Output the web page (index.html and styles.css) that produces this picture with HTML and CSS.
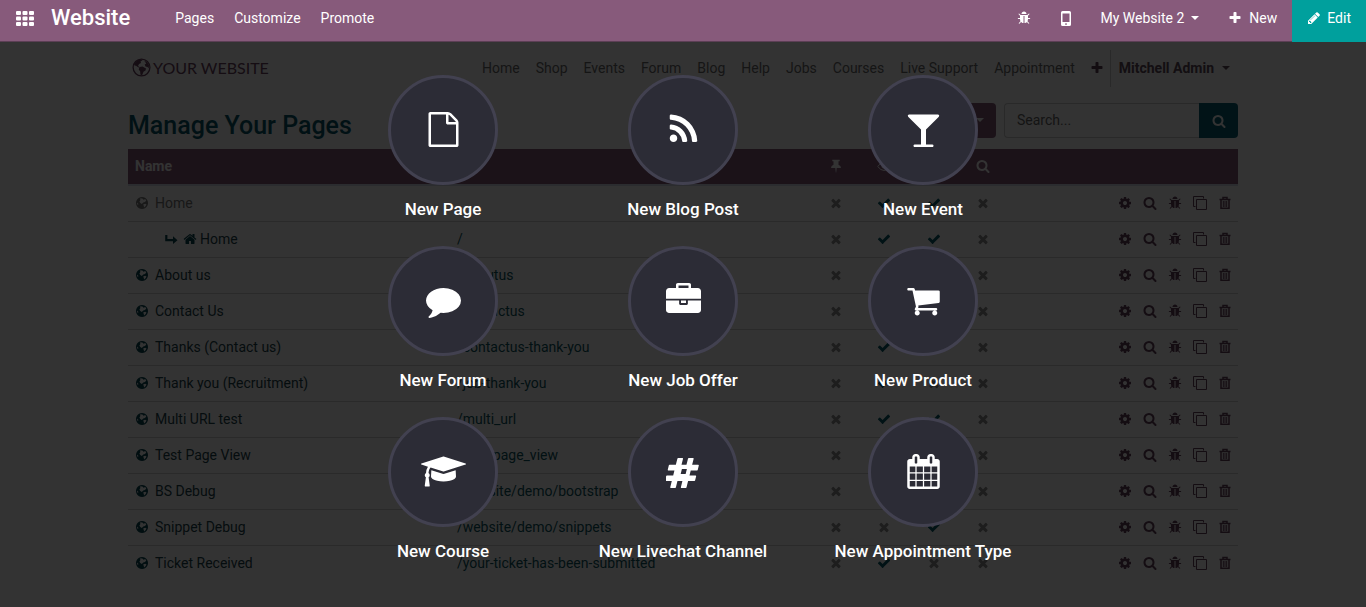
FILE: index.html
```html
<!DOCTYPE html>
<html lang="en">
<head>
<meta charset="utf-8">
<title>Website - Manage Your Pages</title>
<link rel="stylesheet" href="styles.css">
</head>
<body>
<svg class="sprite" aria-hidden="true">
  <symbol id="th" viewBox="0 0 18 15"><rect width="5" height="4" rx="1"/><rect x="6.5" width="5" height="4" rx="1"/><rect x="13" width="5" height="4" rx="1"/><rect y="5.5" width="5" height="4" rx="1"/><rect x="6.5" y="5.5" width="5" height="4" rx="1"/><rect x="13" y="5.5" width="5" height="4" rx="1"/><rect y="11" width="5" height="4" rx="1"/><rect x="6.5" y="11" width="5" height="4" rx="1"/><rect x="13" y="11" width="5" height="4" rx="1"/></symbol>
  <symbol id="search" viewBox="0 0 1792 1792"><path d="M1216 832q0-185-131.5-316.5t-316.5-131.5-316.5 131.5-131.5 316.5 131.5 316.5 316.5 131.5 316.5-131.5 131.5-316.5zm512 832q0 52-38 90t-90 38q-54 0-90-38l-343-342q-179 124-399 124-143 0-273.5-55.5t-225-150-150-225-55.5-273.5 55.5-273.5 150-225 225-150 273.5-55.5 273.5 55.5 225 150 150 225 55.5 273.5q0 220-124 399l343 343q37 37 37 90z"/></symbol>
  <symbol id="plus" viewBox="0 0 1792 1792"><path d="M1600 736v192q0 40-28 68t-68 28h-416v416q0 40-28 68t-68 28h-192q-40 0-68-28t-28-68v-416h-416q-40 0-68-28t-28-68v-192q0-40 28-68t68-28h416v-416q0-40 28-68t68-28h192q40 0 68 28t28 68v416h416q40 0 68 28t28 68z"/></symbol>
  <symbol id="check" viewBox="0 0 1792 1792"><path d="M1671 566q0 40-28 68l-724 724-136 136q-28 28-68 28t-68-28l-136-136-362-362q-28-28-28-68t28-68l136-136q28-28 68-28t68 28l294 295 656-657q28-28 68-28t68 28l136 136q28 28 28 68z"/></symbol>
  <symbol id="times" viewBox="0 0 1792 1792"><path d="M1490 1322q0 40-28 68l-136 136q-28 28-68 28t-68-28l-294-294-294 294q-28 28-68 28t-68-28l-136-136q-28-28-28-68t28-68l294-294-294-294q-28-28-28-68t28-68l136-136q28-28 68-28t68 28l294 294 294-294q28-28 68-28t68 28l136 136q28 28 28 68t-28 68l-294 294 294 294q28 28 28 68z"/></symbol>
  <symbol id="pencil" viewBox="0 0 1792 1792"><path d="M491 1536l91-91-235-235-91 91v107h128v128h107zm523-928q0-22-22-22-10 0-17 7l-542 542q-7 7-7 17 0 22 22 22 10 0 17-7l542-542q7-7 7-17zm-54-192l416 416-832 832h-416v-416zm683 96q0 53-37 90l-166 166-416-416 166-165q36-38 90-38 53 0 91 38l235 234q37 39 37 91z"/></symbol>
  <symbol id="bug" viewBox="0 0 1792 1792"><path d="M1696 960q0 26-19 45t-45 19h-224q0 171-67 290l208 209q19 19 19 45t-19 45q-18 19-45 19t-45-19l-198-197q-5 5-15 13t-42 28.5-65 36.5-82 29-97 13v-896h-128v896q-51 0-101.5-13.5t-87-33-66-39-43.5-32.5l-15-14-183 207q-20 21-48 21-24 0-43-16-19-18-20.5-44.5t15.5-46.5l202-227q-58-114-58-274h-224q-26 0-45-19t-19-45 19-45 45-19h224v-294l-173-173q-19-19-19-45t19-45 45-19 45 19l173 173h844l173-173q19-19 45-19t45 19 19 45-19 45l-173 173v294h224q26 0 45 19t19 45zm-480-576h-640q0-133 93.5-226.5t226.5-93.5 226.5 93.5 93.5 226.5z"/></symbol>
  <symbol id="mobile" viewBox="0 0 10 15"><path fill-rule="evenodd" d="M1.600 0h6.800q1.600 0 1.600 1.600v11.800q0 1.600-1.600 1.600h-6.800q-1.600 0-1.600-1.600v-11.800q0-1.600 1.600-1.600zM1.500 2.500v8.500h7v-8.500zM5 12.200a.8.8 0 1 0 .01 0z"/></symbol>
  <symbol id="home" viewBox="0 0 1792 1792"><path d="M1472 992v480q0 26-19 45t-45 19h-384v-384h-256v384h-384q-26 0-45-19t-19-45v-480q0-1 .5-3t.5-3l575-474 575 474q1 2 1 6zm223-69l-62 74q-8 9-21 11h-3q-13 0-21-7l-692-577-692 577q-12 8-24 7-13-2-21-11l-62-74q-8-10-7-23.500t11-21.500l719-599q32-26 76-26t76 26l244 204v-195q0-14 9-23t23-9h192q14 0 23 9t9 23v408l219 182q10 8 11 21.500t-7 23.500z"/></symbol>
  <symbol id="turn" viewBox="0 0 14 14"><path d="M1.200 3h2.200v4h5.600v-2.700l4.500 3.900-4.500 3.900v-2.800h-7.800z"/></symbol>
  <symbol id="globe" viewBox="0 0 14 14"><path fill-rule="evenodd" d="M7 1a6 6 0 1 0 .01 0zM5.200 2.300l2.200.2 1.200 1.300 1.600-.7 1.100 1.400-1.300 1.500-1.700.6-1.500 1.500-1.500-1-.9-1.600.9-1.200zM8.300 8.300l2-.6 1.200.8-.8 1.600-1.500 1.400-.5-1.600zM2 6.500l1.300 1.300-.2 1.300-.9-.9z"/></symbol>
  <symbol id="world" viewBox="0 0 19 19"><circle cx="9.500" cy="9.500" r="8.400" fill="none" stroke="currentColor" stroke-width="1.300"/><path d="M2 6l3-3.500 4-1.300 1.500 1-2 1.300.5 1.500-2 1-1 2 1.500 1-1 .6-2.500-1.800-1.500-.2zM7.500 9l3-.6 3.500 2.100-.5 2-2 1.300-1.500 3.700-1.600-.9-.2-3-1.500-2zM12 2.500l3 1.600 2 3-.3 3.500-1.200-1.500-2-.5-.8-2 1.600-1z"/></symbol>
  <symbol id="pin" viewBox="0 0 14 14"><path d="M3.300.8h7.400v1.500h-1.200v3.500q2.500 1 2.500 3.200h-4.300l-.5 4.500h-.4l-.5-4.500h-4.300q0-2.200 2.500-3.200v-3.500h-1.200z"/></symbol>
  <symbol id="eye" viewBox="0 0 14 14"><path fill="none" stroke="currentColor" d="M.7 7.500q6.300-8.600 12.600 0-6.300 8-12.600 0z"/><circle cx="7" cy="6.800" r="2.600"/></symbol>
  <symbol id="cog" viewBox="0 0 1792 1792"><path d="M1152 896q0-106-75-181t-181-75-181 75-75 181 75 181 181 75 181-75 75-181zm512-109v222q0 12-8 23t-20 13l-185 28q-19 54-39 91 35 50 107 138 10 12 10 25t-9 23q-27 37-99 108t-94 71q-12 0-26-9l-138-108q-44 23-91 38-16 136-29 186-7 28-36 28h-222q-14 0-24.500-8.500t-11.500-21.500l-28-184q-49-16-90-37l-141 107q-10 9-25 9-14 0-25-11-126-114-165-168-7-10-7-23 0-12 8-23 15-21 51-66.500t54-70.500q-27-50-41-99l-183-27q-13-2-21-12.500t-8-23.500v-222q0-12 8-23t19-13l186-28q14-46 39-92-40-57-107-138-10-12-10-24 0-10 9-23 26-36 98.500-107.500t94.500-71.500q13 0 26 10l138 107q44-23 91-38 16-136 29-186 7-28 36-28h222q14 0 24.500 8.500t11.500 21.500l28 184q49 16 90 37l142-107q9-9 24-9 13 0 25 10 129 119 165 170 7 8 7 22 0 12-8 23-15 21-51 66.500t-54 70.500q26 50 41 98l183 28q13 2 21 12.500t8 23.500z"/></symbol>
  <symbol id="clone" viewBox="0 0 14 14"><path fill="none" stroke="currentColor" d="M3.500 3.500h10v10h-10zM2.500 10.500h-2v-10h10v2"/></symbol>
  <symbol id="trash" viewBox="0 0 14 14"><path fill="none" stroke="currentColor" stroke-width="1.500" d="M1.500 3.500h11M5 3.200v-1.700h4v1.700M3 3.500v8.700h8v-8.700"/><path fill="none" stroke="currentColor" d="M5.300 5v6M7 5v6M8.700 5v6"/></symbol>
  <symbol id="file" viewBox="0 0 1792 1792"><path d="M1596 380q28 28 48 76t20 88v1152q0 40-28 68t-68 28h-1344q-40 0-68-28t-28-68v-1600q0-40 28-68t68-28h896q40 0 88 20t76 48zm-444-244v376h376q-10-29-22-41l-313-313q-12-12-41-22zm384 1528v-1024h-416q-40 0-68-28t-28-68v-416h-768v1536h1280z"/></symbol>
  <symbol id="rss" viewBox="0 0 1792 1792"><path d="M576 1344q0 80-56 136t-136 56-136-56-56-136 56-136 136-56 136 56 56 136zm512 123q2 28-17 48-18 21-47 21h-135q-25 0-43-16.500t-20-41.500q-22-229-184.500-391.500t-391.500-184.500q-25-2-41.500-20t-16.500-43v-135q0-29 21-47 17-17 43-17h5q160 13 306 80.500t259 181.500q114 113 181.500 259t80.500 306zm512 2q2 27-18 47-18 20-46 20h-143q-26 0-44.500-17.500t-19.500-42.500q-12-215-101-408.500t-231.500-336-336-231.500-408.500-102q-25-1-42.500-19.500t-17.500-43.500v-143q0-28 20-46 18-18 44-18h3q262 13 501.500 120t425.500 294q187 186 294 425.500t120 501.500z"/></symbol>
  <symbol id="glass" viewBox="0 0 1792 1792"><path d="M1699 186q0 35-43 78l-632 632v768h320q26 0 45 19t19 45-19 45-45 19h-896q-26 0-45-19t-19-45 19-45 45-19h320v-768l-632-632q-43-43-43-78 0-23 18-36.500t38-17.500 43-4h1408q23 0 43 4t38 17.500 18 36.500z"/></symbol>
  <symbol id="comment" viewBox="0 0 1792 1792"><path d="M1792 896q0 174-120 321.500t-326 233-450 85.500q-70 0-145-8-198 175-460 242-49 14-114 22-17 2-30.500-9t-17.500-29v-1q-3-4-.5-12t2-10 4.500-9.500l6-9 7-8.500 8-9q7-8 31-34.500t34.500-38 31-39.500 32.500-51 27-59 26-76q-157-89-247.500-220t-90.500-281q0-130 71-248.500t191-204.500 286-136.500 348-50.500q244 0 450 85.500t326 233 120 321.500z"/></symbol>
  <symbol id="briefcase" viewBox="0 0 1792 1792"><path d="M640 256h512v-128h-512v128zm1152 640v480q0 66-47 113t-113 47h-1472q-66 0-113-47t-47-113v-480h672v160q0 26 19 45t45 19h320q26 0 45-19t19-45v-160h672zm-768 0v128h-256v-128h256zm768-480v384h-1792v-384q0-66 47-113t113-47h352v-160q0-40 28-68t68-28h576q40 0 68 28t28 68v160h352q66 0 113 47t47 113z"/></symbol>
  <symbol id="cart" viewBox="0 0 1792 1792"><path d="M704 1536q0 52-38 90t-90 38-90-38-38-90 38-90 90-38 90 38 38 90zm896 0q0 52-38 90t-90 38-90-38-38-90 38-90 90-38 90 38 38 90zm128-1088v512q0 24-16.500 42.500t-40.500 21.500l-1044 122q13 60 13 70 0 16-24 64h920q26 0 45 19t19 45-19 45-45 19h-1024q-26 0-45-19t-19-45q0-11 8-31.500t16-36 21.500-40 15.500-29.500l-177-823h-204q-26 0-45-19t-19-45 19-45 45-19h256q16 0 28.500 6.500t19.500 15.500 13 24.500 8 26 5.500 29.500 4.500 26h1201q26 0 45 19t19 45z"/></symbol>
  <symbol id="cap" viewBox="0 0 2304 1792"><path d="M1774 836l18 316q4 69-82 128t-235 93.500-323 34.500-323-34.500-235-93.500-82-128l18-316 574 181q22 7 48 7t48-7zm530-324q0 23-22 31l-1120 352q-4 1-10 1t-10-1l-652-206q-43 34-71 111.500t-34 178.500q63 36 63 109 0 69-58 107l58 433q2 14-8 25-9 11-24 11h-192q-15 0-24-11-10-11-8-25l58-433q-58-38-58-107 0-73 65-111 11-207 98-330l-333-104q-22-8-22-31t22-31l1120-352q4-1 10-1t10 1l1120 352q22 8 22 31z"/></symbol>
  <symbol id="hashtag" viewBox="0 0 1792 1792"><path d="M1005 1024l64-256h-254l-64 256h254zm675-429l-56 224q-7 24-31 24h-327l-64 256h311q15 0 25 12 10 14 6 28l-56 224q-5 24-31 24h-327l-81 328q-7 24-31 24h-224q-16 0-26-12-9-12-6-28l78-312h-254l-81 328q-7 24-31 24h-225q-15 0-25-12-9-12-6-28l78-312h-311q-15 0-25-12-9-12-6-28l56-224q7-24 31-24h327l64-256h-311q-15 0-25-12-10-14-6-28l56-224q5-24 31-24h327l81-328q7-24 32-24h224q15 0 25 12 9 12 6 28l-78 312h254l81-328q7-24 32-24h224q15 0 25 12 9 12 6 28l-78 312h311q15 0 25 12 9 12 6 28z"/></symbol>
  <symbol id="calendar" viewBox="0 0 1792 1792"><path d="M192 1664h288v-288h-288v288zm352 0h320v-288h-320v288zm-352-352h288v-320h-288v320zm352 0h320v-320h-320v320zm-352-384h288v-288h-288v288zm736 736h320v-288h-320v288zm-384-736h320v-288h-320v288zm768 736h288v-288h-288v288zm-384-352h320v-320h-320v320zm-352-864v-288q0-13-9.500-22.500t-22.500-9.500h-64q-13 0-22.500 9.500t-9.500 22.500v288q0 13 9.500 22.500t22.500 9.500h64q13 0 22.500-9.500t9.500-22.500zm736 864h288v-320h-288v320zm-384-384h320v-288h-320v288zm384 0h288v-288h-288v288zm32-480v-288q0-13-9.500-22.500t-22.500-9.500h-64q-13 0-22.500 9.500t-9.500 22.500v288q0 13 9.500 22.500t22.500 9.500h64q13 0 22.500-9.500t9.500-22.500zm384-64v1280q0 52-38 90t-90 38h-1408q-52 0-90-38t-38-90v-1280q0-52 38-90t90-38h128v-96q0-66 47-113t113-47h64q66 0 113 47t47 113v96h384v-96q0-66 47-113t113-47h64q66 0 113 47t47 113v96h128q52 0 90 38t38 90z"/></symbol>
</svg>

<nav class="topbar">
  <button class="apps" aria-label="Apps"><svg><use href="#th"/></svg></button>
  <a class="brand" href="#">Website</a>
  <div class="menu">
    <a href="#">Pages</a>
    <a href="#">Customize</a>
    <a href="#">Promote</a>
  </div>
  <div class="tools">
    <button aria-label="Debug"><svg class="icon"><use href="#bug"/></svg></button>
    <button aria-label="Mobile preview"><svg class="mobile"><use href="#mobile"/></svg></button>
    <button>My Website 2<span class="caret"></span></button>
    <button class="new"><svg class="icon"><use href="#plus"/></svg>New</button>
    <button class="edit"><svg class="icon"><use href="#pencil"/></svg>Edit</button>
  </div>
</nav>

<div class="stage">
  <div class="page">
    <header class="site-header">
      <a class="logo" href="#"><svg><use href="#world"/></svg>YOUR WEBSITE</a>
      <nav class="site-nav">
        <a href="#">Home</a>
        <a href="#">Shop</a>
        <a href="#">Events</a>
        <a href="#">Forum</a>
        <a href="#">Blog</a>
        <a href="#">Help</a>
        <a href="#">Jobs</a>
        <a href="#">Courses</a>
        <a href="#">Live Support</a>
        <a href="#">Appointment</a>
        <button class="add" aria-label="Add menu"><svg class="icon"><use href="#plus"/></svg></button>
        <button class="user">Mitchell Admin<span class="caret"></span></button>
      </nav>
    </header>

    <div class="heading">
      <h1>Manage Your Pages</h1>
      <button class="filter" aria-label="Choose website"><span class="caret"></span></button>
      <form class="search">
        <input type="search" placeholder="Search..." aria-label="Search pages">
        <button type="button" aria-label="Search"><svg class="icon"><use href="#search"/></svg></button>
      </form>
    </div>

    <table class="pages">
      <colgroup>
        <col class="col-name"><col><col class="col-flag"><col class="col-flag"><col class="col-flag-wide"><col class="col-flag"><col class="col-actions">
      </colgroup>
      <thead>
        <tr>
          <th>Name</th>
          <th></th>
          <th class="flag"><svg class="icon"><use href="#pin"/></svg></th>
          <th class="flag"><svg class="icon"><use href="#eye"/></svg></th>
          <th class="flag"></th>
          <th class="flag"><svg class="icon"><use href="#search"/></svg></th>
          <th></th>
        </tr>
      </thead>
      <tbody id="rows"></tbody>
    </table>
  </div>

  <div class="overlay">
    <div class="tiles">
      <a class="tile" href="#"><span class="disc"><svg><use href="#file"/></svg></span>New Page</a>
      <a class="tile" href="#"><span class="disc"><svg><use href="#rss"/></svg></span>New Blog Post</a>
      <a class="tile" href="#"><span class="disc"><svg><use href="#glass"/></svg></span>New Event</a>
      <a class="tile" href="#"><span class="disc"><svg><use href="#comment"/></svg></span>New Forum</a>
      <a class="tile" href="#"><span class="disc"><svg><use href="#briefcase"/></svg></span>New Job Offer</a>
      <a class="tile" href="#"><span class="disc"><svg><use href="#cart"/></svg></span>New Product</a>
      <a class="tile" href="#"><span class="disc"><svg class="wide"><use href="#cap"/></svg></span>New Course</a>
      <a class="tile" href="#"><span class="disc"><svg><use href="#hashtag"/></svg></span>New Livechat Channel</a>
      <a class="tile" href="#"><span class="disc"><svg><use href="#calendar"/></svg></span>New Appointment Type</a>
    </div>
  </div>
</div>
<script src="pages.js"></script>
</body>
</html>
```

FILE: styles.css
```css
* { box-sizing: border-box; }

body {
  margin: 0;
  font: 14px/20px Roboto, "Liberation Sans", sans-serif;
  color: #222;
  background: #fff;
}

a { color: inherit; text-decoration: none; }

button {
  margin: 0;
  padding: 0;
  border: 0;
  background: none;
  color: inherit;
  font: inherit;
  cursor: pointer;
}

svg { display: block; fill: currentColor; }
.sprite { position: absolute; width: 0; height: 0; }
.icon { width: 14px; height: 14px; flex: none; }

.caret {
  display: inline-block;
  border: 4px solid transparent;
  border-top-color: currentColor;
  border-bottom: 0;
}

/* Top bar */
.topbar {
  display: flex;
  height: 42px;
  background: #875a7b;
  border-bottom: 1px solid #5c3f55;
  color: #fff;
  font-weight: 500;
}
.topbar a, .topbar button {
  display: flex;
  align-items: center;
  padding: 0 10px 5px;
}
.topbar .apps { padding-left: 16px; padding-right: 17px; }
.apps svg { width: 18px; height: 15px; }
.topbar .brand { padding-left: 0; padding-right: 35px; font-size: 22px; }
.menu, .tools { display: flex; }
.menu a, .tools button { font-weight: 400; }
.tools { margin-left: auto; margin-bottom: -1px; }
.tools button { padding: 0 15px 6px; }
.mobile { width: 10px; height: 15px; }
.tools .caret { margin-left: 7px; }
.tools .new { gap: 7px; padding-left: 14px; }
.tools .edit { gap: 6px; background: #00a09d; }

/* Page under the dialog */
.stage {
  position: relative;
  min-height: calc(100vh - 42px);
}
.page {
  max-width: 1140px;
  margin: 0 auto;
  padding: 8px 15px 24px;
}

.site-header {
  display: flex;
  justify-content: space-between;
  align-items: center;
  height: 37px;
}
.logo {
  display: flex;
  align-items: center;
  gap: 2px;
  padding: 0 0 2px 4px;
  font: 16px/20px Lato, sans-serif;
  color: #6a4260;
}
.logo svg { width: 19px; height: 19px; }
.site-nav { display: flex; align-items: center; color: #6c6c6c; }
.site-nav a { padding: 0 8px 2px; }
.site-nav .add { padding: 0 6px 2px 7px; color: #604058; }
.site-nav .user {
  height: 37px;
  padding: 0 8px 2px;
  border-left: 1px solid #ccc;
  font-weight: 700;
  color: #604a5a;
}
.user .caret { margin-left: 8px; vertical-align: 3px; }

.heading {
  display: flex;
  align-items: center;
  gap: 8px;
  margin: 16px 0 11px;
}
h1 {
  flex: 1;
  margin: 0;
  padding-top: 10px;
  font-size: 25px;
  line-height: 25px;
  font-weight: 500;
  color: #085868;
}
.filter {
  width: 110px;
  height: 35px;
  padding-right: 12px;
  border-radius: 4px;
  background: #875a7b;
  color: #fff;
  text-align: right;
}
.filter .caret { vertical-align: 4px; }
.search { display: flex; width: 234px; height: 35px; }
.search input {
  flex: 1;
  min-width: 0;
  padding: 0 12px 2px;
  border: 1px solid #ccc;
  border-right: 0;
  border-radius: 4px 0 0 4px;
  background: #fff;
  font: inherit;
}
.search input::placeholder { color: #666; opacity: 1; }
.search button {
  display: grid;
  place-items: center;
  width: 39px;
  border-radius: 0 4px 4px 0;
  background: #086274;
  color: #fff;
}

.pages {
  width: 100%;
  table-layout: fixed;
  border-collapse: collapse;
  text-align: left;
}
.col-name { width: 29%; }
.col-flag { width: 48px; }
.col-flag-wide { width: 51px; }
.col-actions { width: 231px; }
.pages th {
  height: 36px;
  padding: 0 7px 1px;
  border-bottom: 2px solid #d8dce8;
  background: #875a7b;
  color: #fff;
  font-weight: 700;
}
.pages td {
  height: 36px;
  padding: 0 7px;
  border-bottom: 1px solid #d0d0d0;
  color: #0c5562;
}
.pages tr:last-child td { border-bottom: 0; }
.pages td:first-child { color: #1c444c; }
.name { display: flex; align-items: center; gap: 6px; }
.name .icon { color: #084652; }
.name.muted, .name.muted .icon { color: #777; }
.name.child { gap: 3px; padding-left: 29px; }
.name.child .icon:first-child { margin-right: 2px; }
.flag .icon { margin: 0 auto; }
.pages .no { color: #909090; }
.pages .yes { color: #085c6a; }
.pages td:last-child { padding-right: 6px; }
.actions { display: flex; justify-content: flex-end; gap: 11px; color: #66405c; }

/* "New content" dialog */
.overlay {
  position: absolute;
  inset: 0;
  padding-top: 33px;
  background: rgba(0, 0, 0, 0.8);
}
.tiles {
  display: grid;
  grid-template-columns: repeat(3, 1fr);
  gap: 27px 0;
  max-width: 720px;
  margin: 0 auto;
}
.tile {
  display: flex;
  flex-direction: column;
  align-items: center;
  gap: 14px;
  color: #fff;
  font-size: 17px;
  line-height: 20px;
  font-weight: 500;
  white-space: nowrap;
}
.disc {
  display: grid;
  place-items: center;
  width: 110px;
  height: 110px;
  padding-bottom: 2px;
  border: 3px solid #424150;
  border-radius: 50%;
  background: #2c2c36;
}
.disc svg { width: 35px; height: 35px; }
.disc .wide { width: 45px; }
```

FILE: pages.js
```javascript
// flags: pinned, published, in menu, indexed
const pages = [
  { name: "Home", url: "", flags: [0, 1, 1, 0], kind: "muted" },
  { name: "Home", url: "/", flags: [0, 1, 1, 0], kind: "child" },
  { name: "About us", url: "/aboutus", flags: [0, 1, 1, 0] },
  { name: "Contact Us", url: "/contactus", flags: [0, 1, 1, 0] },
  { name: "Thanks (Contact us)", url: "/contactus-thank-you", flags: [0, 1, 0, 0] },
  { name: "Thank you (Recruitment)", url: "/job-thank-you", flags: [0, 1, 0, 0] },
  { name: "Multi URL test", url: "/multi_url", flags: [0, 1, 1, 0] },
  { name: "Test Page View", url: "/test_page_view", flags: [0, 1, 1, 0] },
  { name: "BS Debug", url: "/website/demo/bootstrap", flags: [0, 1, 1, 0] },
  { name: "Snippet Debug", url: "/website/demo/snippets", flags: [0, 0, 1, 0] },
  { name: "Ticket Received", url: "/your-ticket-has-been-submitted", flags: [0, 1, 0, 0] }
];
const actions = [["cog", "Settings"], ["search", "Optimize"], ["bug", "Debug"], ["clone", "Clone"], ["trash", "Delete"]];
const icon = id => `<svg class="icon"><use href="#${id}"/></svg>`;

document.getElementById("rows").innerHTML = pages.map(p => `
  <tr>
    <td><div class="name ${p.kind || ""}">${p.kind === "child" ? icon("turn") + icon("home") : icon("globe")}<span>${p.name}</span></div></td>
    <td><a href="#">${p.url}</a></td>
    ${p.flags.map(f => `<td class="flag ${f ? "yes" : "no"}">${icon(f ? "check" : "times")}</td>`).join("")}
    <td><div class="actions">${actions.map(([id, label]) => `<button aria-label="${label}">${icon(id)}</button>`).join("")}</div></td>
  </tr>`).join("");
```
